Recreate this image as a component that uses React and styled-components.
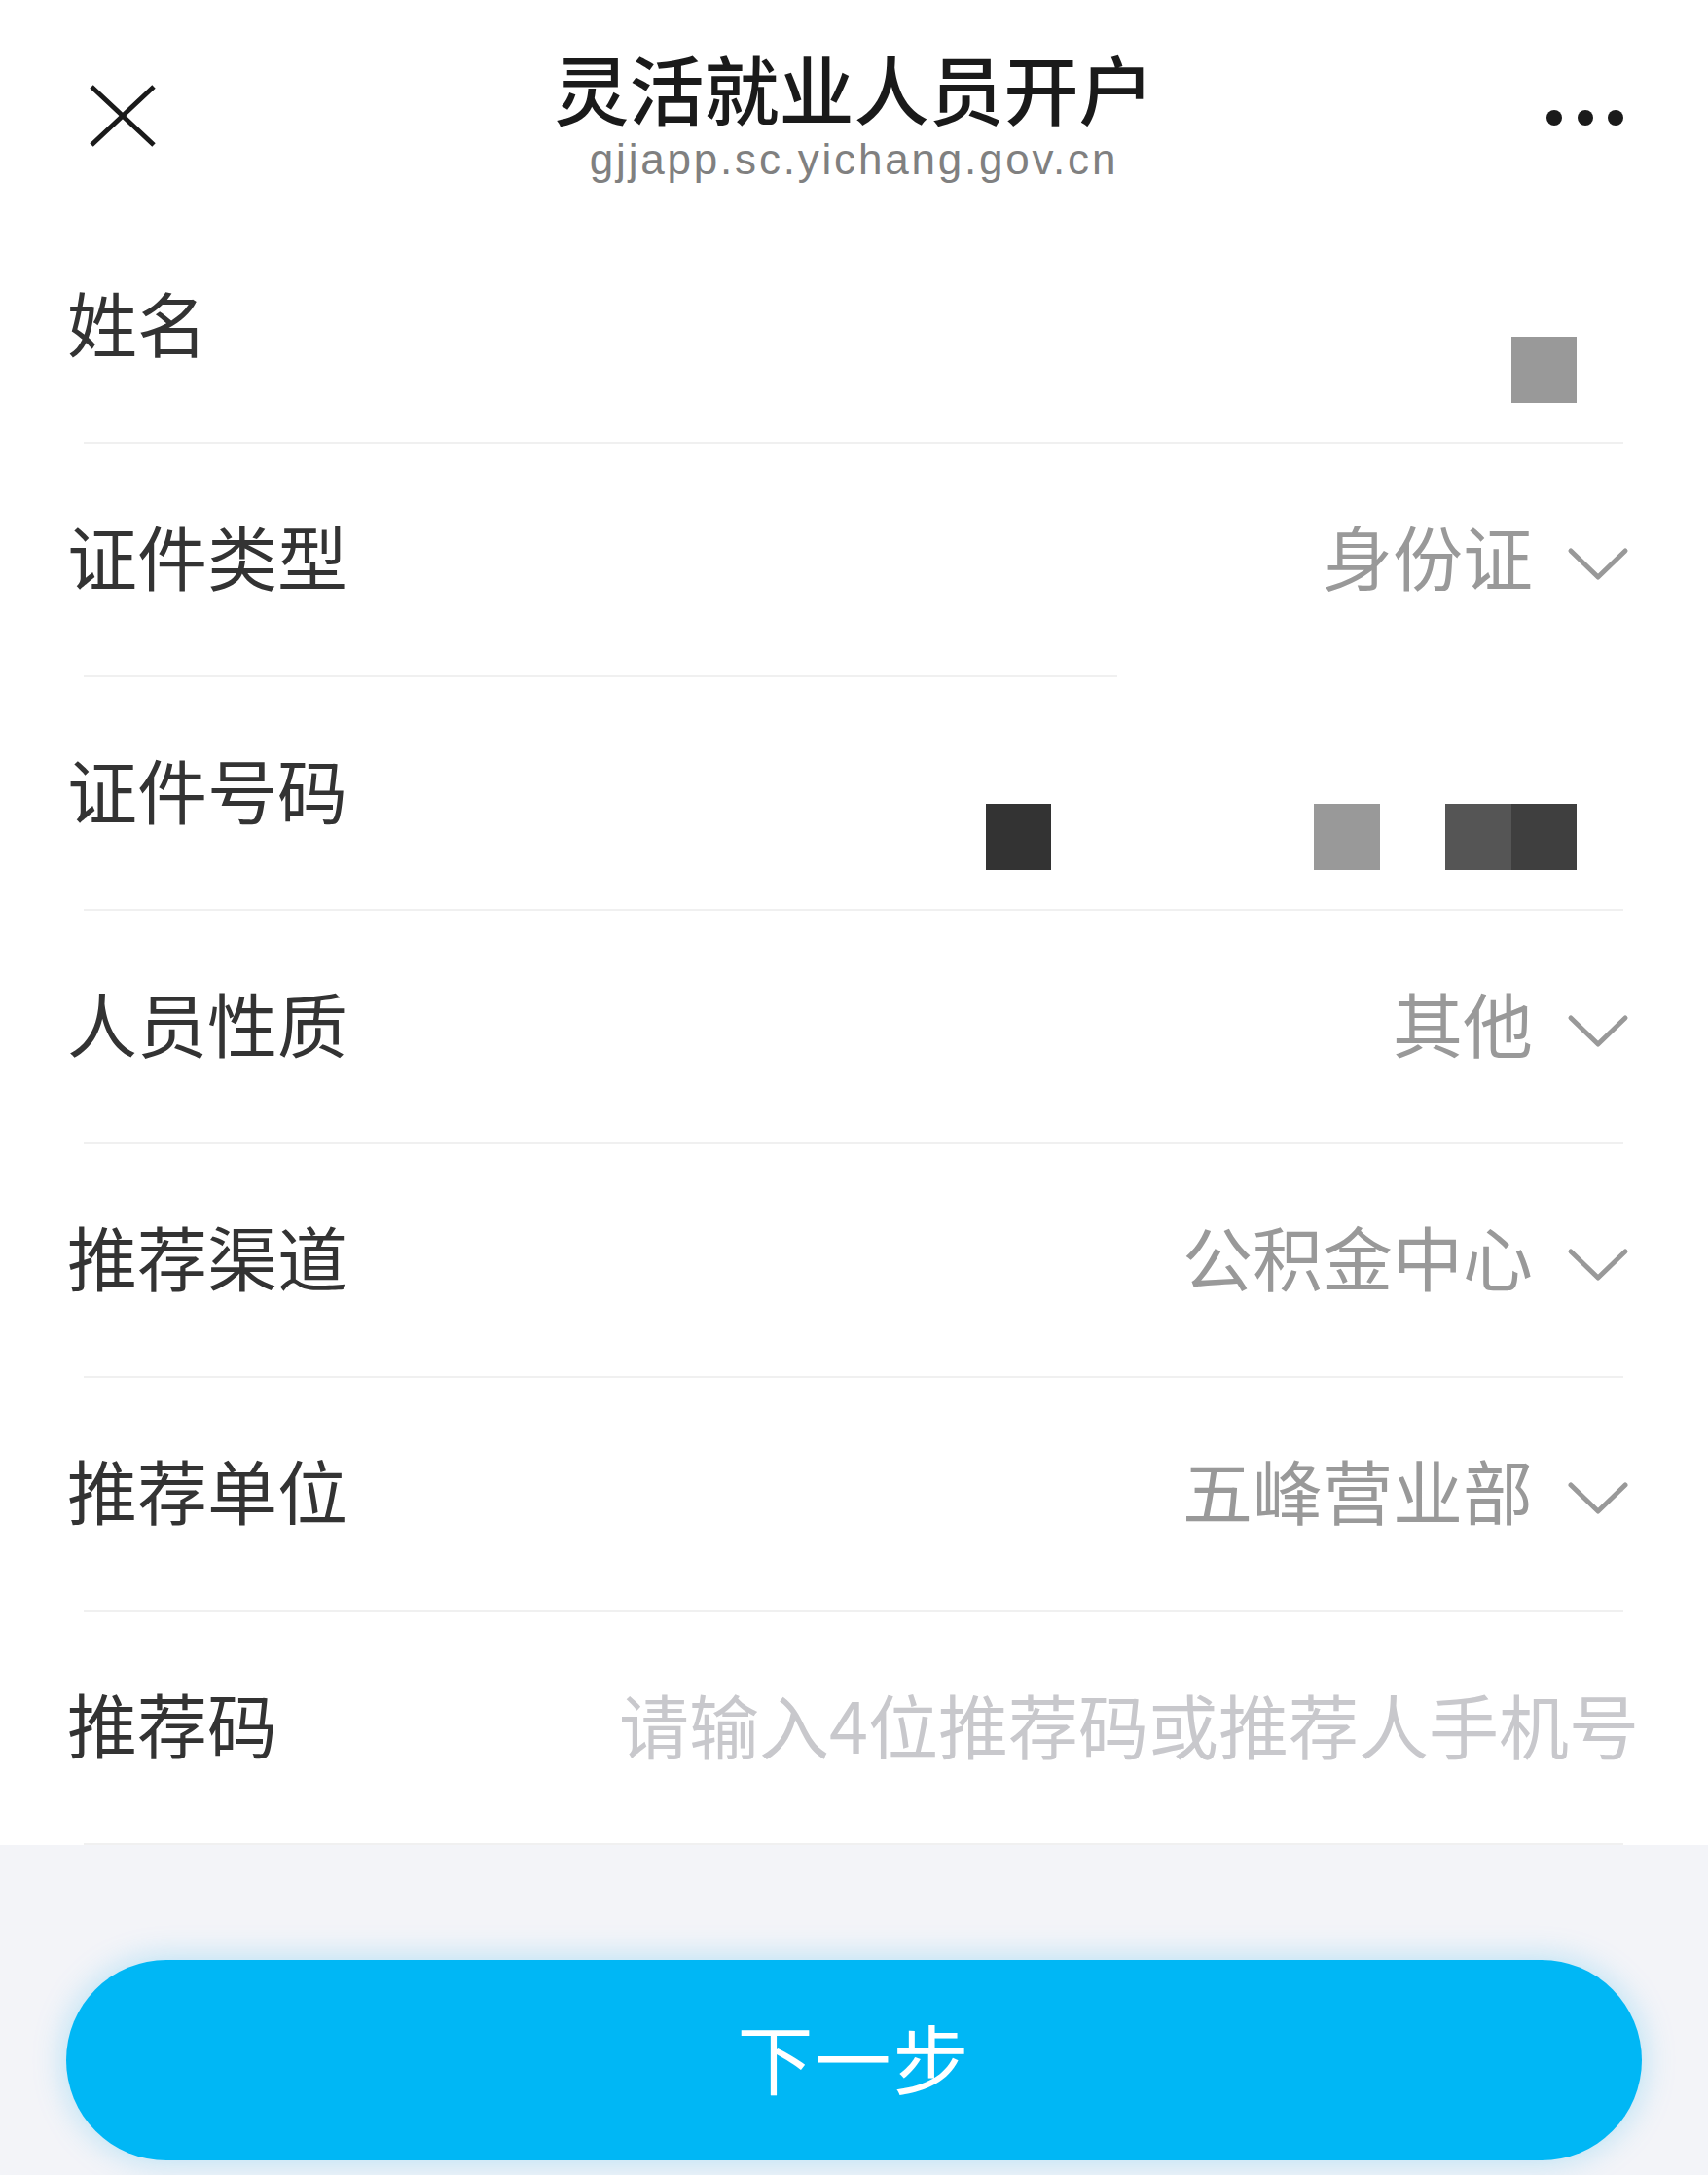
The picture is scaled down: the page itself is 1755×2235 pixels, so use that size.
import styled, { createGlobalStyle } from "styled-components";

const GlobalStyle = createGlobalStyle`
  html, body {
    margin: 0;
    padding: 0;
    background: #f3f4f8;
  }
  body {
    font-family: "Noto Sans CJK SC", "Noto Sans", sans-serif;
  }
`;

const Page = styled.div`
  width: 1755px;
  min-height: 2235px;
  display: flex;
  flex-direction: column;
  background: #f3f4f8;
`;

const Form = styled.div`
  background: #ffffff;
`;

const Header = styled.header`
  height: 216px;
  display: grid;
  grid-template-columns: 1fr auto 1fr;
  align-items: start;
  padding: 0 86px;
`;

const CloseButton = styled.button`
  justify-self: start;
  margin: 86px 0 0 5px;
  padding: 0;
  border: none;
  background: none;
  line-height: 0;
`;

const MoreButton = styled.button`
  justify-self: end;
  margin-top: 111px;
  padding: 0;
  border: none;
  background: none;
  line-height: 0;
`;

const TitleBlock = styled.div`
  display: flex;
  flex-direction: column;
  align-items: center;
  padding-top: 50px;
`;

const Title = styled.h1`
  margin: 0;
  font-size: 77px;
  line-height: 80px;
  font-weight: 500;
  color: #1a1a1a;
`;

const Subtitle = styled.div`
  margin-top: 8px;
  font-family: "Liberation Sans", Arial, sans-serif;
  font-size: 44px;
  line-height: 52px;
  letter-spacing: 2.8px;
  color: #808080;
`;

const Row = styled.div`
  height: 238px;
  display: flex;
  align-items: center;
  justify-content: space-between;
  padding: 0 71px 0 69px;
`;

const Label = styled.span`
  margin-bottom: 10px;
  font-size: 72px;
  line-height: 1;
  color: #333333;
  white-space: nowrap;
`;

const Divider = styled.div`
  height: 2px;
  margin: 0 ${(p) => (p.$short ? 607 : 87)}px 0 86px;
  background: #f0f0f0;
`;

const Picker = styled.div`
  display: flex;
  align-items: center;
  margin-right: 10px;
`;

const PickerValue = styled.span`
  margin-bottom: 10px;
  font-size: 72px;
  line-height: 1;
  color: #999999;
`;

const Chevron = styled.svg`
  margin-left: 35px;
`;

const Mosaic = styled.div`
  display: flex;
  margin: 90px 64px 0 0;
`;

const Cell = styled.span`
  width: 67.5px;
  height: 68px;
  background: ${(p) => p.$color || "transparent"};
`;

const CodeInput = styled.input`
  flex: 1;
  min-width: 0;
  margin: 0 0 10px 40px;
  padding: 0;
  border: none;
  outline: none;
  background: transparent;
  text-align: right;
  font-family: "Noto Sans CJK SC", "Noto Sans", sans-serif;
  font-size: 72px;
  color: #333333;

  &::placeholder {
    color: #c8c8cc;
  }
`;

const Footer = styled.div`
  flex: 1;
  padding: 118px 68px 15px;
`;

const NextButton = styled.button`
  width: 100%;
  height: 206px;
  padding: 0 0 8px;
  border: none;
  border-radius: 103px;
  background: #00b7f5;
  box-shadow: 0 0 34px rgba(0, 170, 240, 0.28);
  color: #ffffff;
  font-family: "Noto Sans CJK SC", "Noto Sans", sans-serif;
  font-size: 78px;
  line-height: 1;
  letter-spacing: 2px;
`;

const CloseIcon = () => (
  <svg width="70" height="66" viewBox="0 0 70 66">
    <path
      d="M3 3 L67 63 M67 3 L3 63"
      stroke="#1a1a1a"
      strokeWidth="5"
      fill="none"
    />
  </svg>
);

const MoreIcon = () => (
  <svg width="80" height="20" viewBox="0 0 80 20">
    <circle cx="8" cy="10" r="8" fill="#1a1a1a" />
    <circle cx="40" cy="10" r="8" fill="#1a1a1a" />
    <circle cx="71" cy="10" r="8" fill="#1a1a1a" />
  </svg>
);

const SelectRow = ({ label, value }) => (
  <Row>
    <Label>{label}</Label>
    <Picker>
      <PickerValue>{value}</PickerValue>
      <Chevron width="64" height="44" viewBox="0 0 64 44">
        <path
          d="M4 13 L32 40 L60 13"
          stroke="#999999"
          strokeWidth="5"
          strokeLinecap="round"
          strokeLinejoin="round"
          fill="none"
        />
      </Chevron>
    </Picker>
  </Row>
);

const MaskedRow = ({ label, cells }) => (
  <Row>
    <Label>{label}</Label>
    <Mosaic>
      {cells.map((c, i) => (
        <Cell key={i} $color={c} />
      ))}
    </Mosaic>
  </Row>
);

const App = () => {
  return (
    <Page>
      <GlobalStyle />
      <Form>
        <Header>
          <CloseButton>
            <CloseIcon />
          </CloseButton>
          <TitleBlock>
            <Title>灵活就业人员开户</Title>
            <Subtitle>gjjapp.sc.yichang.gov.cn</Subtitle>
          </TitleBlock>
          <MoreButton>
            <MoreIcon />
          </MoreButton>
        </Header>

        <MaskedRow label="姓名" cells={["#999999"]} />
        <Divider />
        <SelectRow label="证件类型" value="身份证" />
        <Divider $short />
        <MaskedRow
          label="证件号码"
          cells={["#333333", null, null, null, null, "#999999", null, "#555555", "#3f3f3f"]}
        />
        <Divider />
        <SelectRow label="人员性质" value="其他" />
        <Divider />
        <SelectRow label="推荐渠道" value="公积金中心" />
        <Divider />
        <SelectRow label="推荐单位" value="五峰营业部" />
        <Divider />
        <Row>
          <Label>推荐码</Label>
          <CodeInput placeholder="请输入4位推荐码或推荐人手机号" />
        </Row>
        <Divider />
      </Form>
      <Footer>
        <NextButton>下一步</NextButton>
      </Footer>
    </Page>
  );
};

export default App;
